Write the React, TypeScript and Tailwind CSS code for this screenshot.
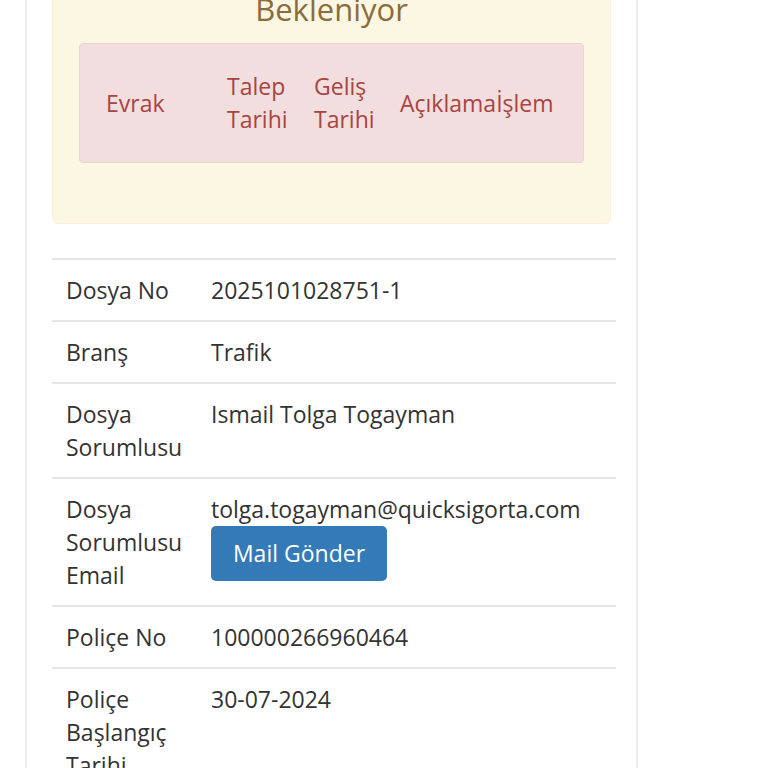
const rows: { label: string[]; value: string; mail?: boolean }[] = [
  { label: ['Dosya No'], value: '2025101028751-1' },
  { label: ['Branş'], value: 'Trafik' },
  { label: ['Dosya', 'Sorumlusu'], value: 'Ismail Tolga Togayman' },
  { label: ['Dosya', 'Sorumlusu', 'Email'], value: 'tolga.togayman@quicksigorta.com', mail: true },
  { label: ['Poliçe No'], value: '100000266960464' },
  { label: ['Poliçe', 'Başlangıç', 'Tarihi'], value: '30-07-2024' },
];

export default function App() {
  return (
    <div className="h-[768px] w-[768px] overflow-hidden bg-white font-['Open_Sans',sans-serif] text-[#333]">
      <div className="ml-[25px] w-[613px] border-x-2 border-[#ececec] pl-[25px] pr-[20px] pb-10">
        {/* Warning box */}
        <div className="-mt-[12px] w-[559px] rounded-md border border-[#faf0d6] bg-[#fcf7e3] px-[26px] pb-[60px] pt-0">
          <h3 className="text-center text-[31px] leading-[40px] text-[#8a6d3b]">Bekleniyor</h3>
          <div className="mt-[14px] rounded border border-[#ebd4d6] bg-[#f2dede] px-[26px] py-[26px] text-[23px] leading-[33px] text-[#a94442]">
            <div className="flex items-center">
              <div className="w-[121px]">Evrak</div>
              <div className="w-[87px]">Talep<br />Tarihi</div>
              <div className="w-[86px]">Geliş<br />Tarihi</div>
              <div>Açıklama</div>
              <div>İşlem</div>
            </div>
          </div>
        </div>

        {/* Details table */}
        <div className="mt-[34px] text-[23px] leading-[33px]">
          {rows.map((r, i) => (
            <div key={i} className="flex border-t-2 border-[#e6e6e6] pb-[13px] pt-[14px]">
              <div className="w-[159px] shrink-0 pl-[14px]">
                {r.label.map((l, j) => (
                  <div key={j}>{l}</div>
                ))}
              </div>
              <div className="flex-1">
                <div>{r.value}</div>
                {r.mail && (
                  <button className="h-[55px] w-[176px] rounded-[5px] bg-[#337ab7] text-[23px] text-white">
                    Mail Gönder
                  </button>
                )}
              </div>
            </div>
          ))}
        </div>
      </div>
    </div>
  );
}
